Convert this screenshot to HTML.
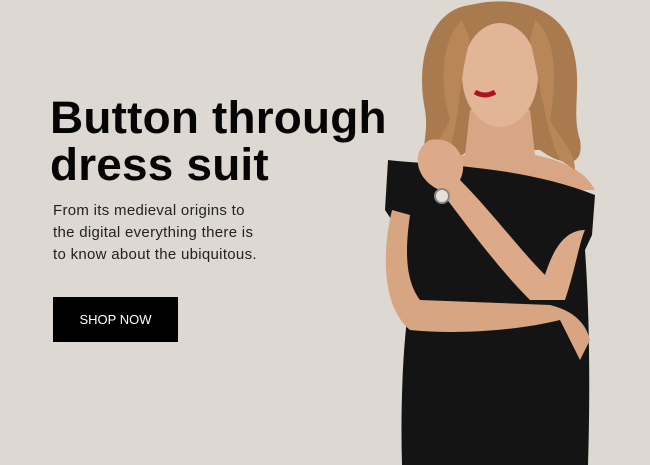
<!DOCTYPE html>
<html><head><style>
body{margin:0;width:650px;height:465px;overflow:hidden;background:#ddd9d2;font-family:"Liberation Sans",sans-serif;position:relative}
h1{position:absolute;left:50px;top:94px;margin:0;font-size:45px;line-height:47px;font-weight:bold;color:#050505;letter-spacing:0.2px;transform:scaleX(1.02);transform-origin:left}
p{position:absolute;left:53px;top:200px;margin:0;font-size:15px;line-height:22px;color:#222;width:260px;letter-spacing:0.3px}
.btn{position:absolute;left:53px;top:297px;width:125px;height:45px;background:#000;color:#fff;font-size:13px;line-height:45px;text-align:center}
svg{position:absolute;left:0;top:0}
</style></head><body>
<svg width="650" height="465">
<path d="M470 5 C430 10 415 60 425 110 C430 140 415 160 430 175 L470 150 L540 150 C560 165 585 170 580 140 C570 110 585 80 570 40 C555 5 510 -5 470 5Z" fill="#a97a4e"/>
<path d="M470 110 L530 110 L535 155 C560 160 585 170 595 190 L400 190 C410 170 440 160 465 155Z" fill="#d9a685"/>
<ellipse cx="500" cy="75" rx="38" ry="52" fill="#e3b597"/>
<path d="M475 92 q10 6 20 0" stroke="#b01020" stroke-width="5" fill="none"/>
<path d="M462 20 C440 40 440 90 450 120 C440 140 430 150 430 170 L445 160 C460 130 458 80 470 40Z" fill="#b88657"/>
<path d="M535 20 C560 40 555 90 550 120 C560 140 575 150 575 170 L560 160 C545 130 540 80 530 40Z" fill="#b88657"/>
<path d="M388 160 C430 165 520 165 595 195 L592 235 L585 250 C590 320 590 400 588 465 L402 465 C400 400 404 330 410 300 L395 225 L385 210Z" fill="#141414"/>
<path d="M392 210 C380 260 385 310 410 330 C460 335 520 330 560 320 L580 360 L590 340 C585 320 570 310 550 305 L420 300 C405 280 405 250 410 215Z" fill="#d8a583"/>
<path d="M430 140 C410 150 415 180 440 190 C470 230 500 270 530 300 L565 300 C575 270 580 240 585 230 C560 230 550 260 545 275 C520 250 490 210 460 180 C470 160 455 135 430 140Z" fill="#dcaa88"/>
<circle cx="442" cy="196" r="7" fill="#e8e0d8" stroke="#888" stroke-width="2"/>
</svg>
<h1>Button through<br>dress suit</h1>
<p>From its medieval origins to<br>the digital everything there is<br>to know about the ubiquitous.</p>
<div class="btn">SHOP NOW</div>
</body></html>
